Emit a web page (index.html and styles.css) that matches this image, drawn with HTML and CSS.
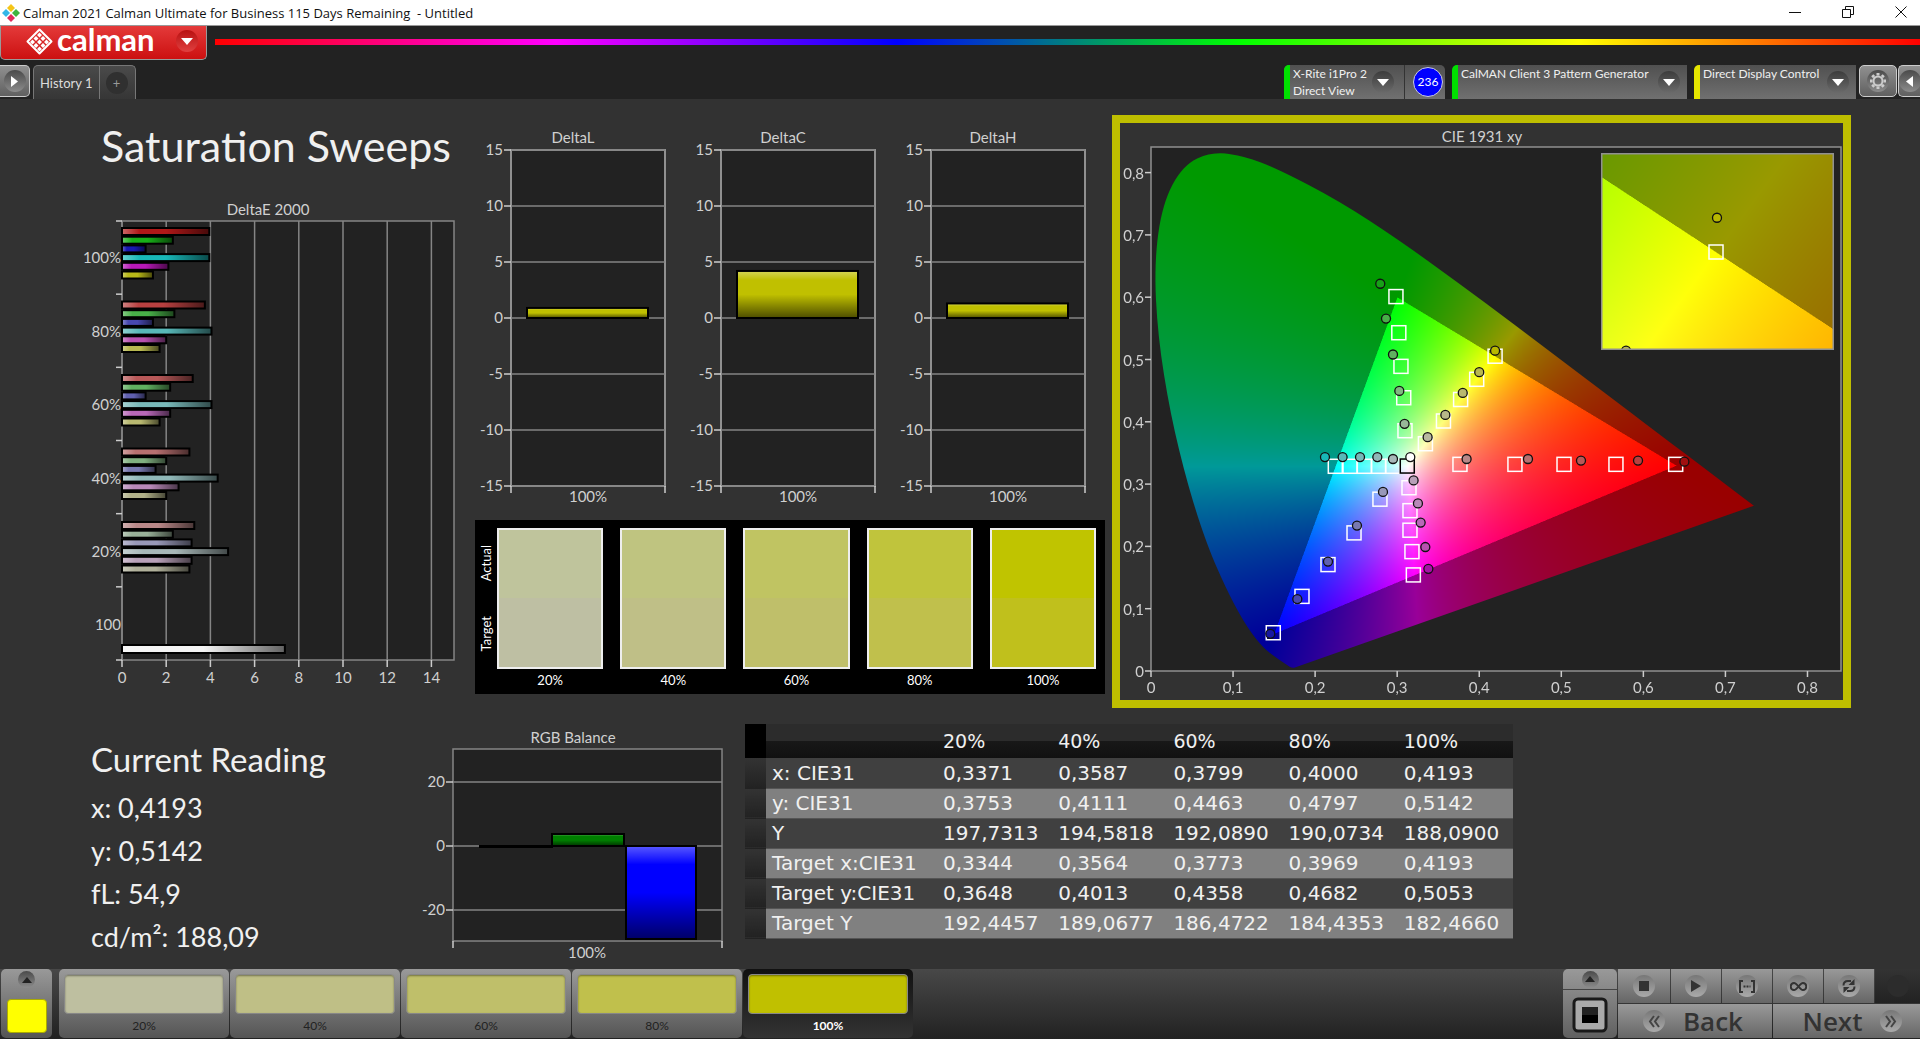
FILE: index.html
```
<!DOCTYPE html>
<html lang="en">
<head>
    <meta charset="UTF-8">
    <meta name="viewport" content="width=device-width, initial-scale=1.0">
    <title>Calman 2021 - Untitled</title>
    <link rel="stylesheet" href="styles.css">
</head>
<body>
    <header class="titlebar">
        <svg class="app-icon" width="18" height="18" viewBox="0 0 18 18">
            <path d="M9 0l4 4-4 4-4-4z" fill="#f5c518"/>
            <path d="M4 5l4 4-4 4-4-4z" fill="#35b6e8"/>
            <path d="M14 5l4 4-4 4-4-4z" fill="#3fb43f"/>
            <path d="M9 10l4 4-4 4-4-4z" fill="#e22a5b"/>
        </svg>
        <span class="window-title">Calman 2021 Calman Ultimate for Business 115 Days Remaining &nbsp;- Untitled</span>
        <div class="window-buttons">
            <button aria-label="Minimize"><svg width="12" height="12" viewBox="0 0 12 12"><path d="M0 6.500h12"/></svg></button>
            <button aria-label="Restore"><svg width="12" height="12" viewBox="0 0 12 12"><path d="M.5 3.500h8v8h-8zM3.500 3.500v-3h8v8h-3"/></svg></button>
            <button aria-label="Close"><svg width="12" height="12" viewBox="0 0 12 12"><path d="M.5.5l11 11M11.500.5l-11 11"/></svg></button>
        </div>
    </header>

    <div class="brand-row">
        <button class="brand">
            <svg width="27" height="27" viewBox="0 0 27 27">
                <path d="M13.500 1.500l12 12-12 12-12-12z" fill="none" stroke="#fff" stroke-width="2" stroke-linejoin="round"/>
                <g fill="#fff">
                    <path d="M13.500 4.500l2.500 2.500-2.500 2.500-2.500-2.500zM10 8l2.500 2.500-2.500 2.500-2.500-2.500zM17 8l2.500 2.500-2.500 2.500-2.500-2.500zM6.500 11.500l2.500 2.500-2.500 2.500-2.500-2.500zM13.500 11.500l2.500 2.500-2.500 2.500-2.500-2.500zM20.500 11.500l2.500 2.500-2.500 2.500-2.500-2.500zM10 15l2.500 2.500-2.500 2.500-2.500-2.500zM17 15l2.500 2.500-2.500 2.500-2.500-2.500zM13.500 18.500l2.500 2.500-2.500 2.500-2.500-2.500z"/>
                </g>
            </svg>
            <span class="brand-name">calman</span>
            <span class="round round-red"><svg width="12" height="7" viewBox="0 0 12 7"><path d="M0 0h12l-6 7z" fill="#fff"/></svg></span>
        </button>
        <div class="rainbow"></div>
    </div>

    <nav class="tab-row">
        <button class="chip chip-left" aria-label="Expand"><span class="round"><svg width="7" height="11" viewBox="0 0 7 11"><path d="M0 0l7 5.500-7 5.500z" fill="#fff"/></svg></span></button>
        <div class="tabs">
            <button class="tab">History 1</button>
            <button class="tab tab-add" aria-label="Add tab"><span class="round round-dark">+</span></button>
        </div>
        <div class="devices">
            <div class="device device-meter">
                <button class="device-select green">
                    <span>X-Rite i1Pro 2<br>Direct View</span>
                    <span class="round round-dark"><svg width="12" height="7" viewBox="0 0 12 7"><path d="M0 0h12l-6 7z" fill="#fff"/></svg></span>
                </button>
                <span class="badge">236</span>
            </div>
            <button class="device device-select device-source green">
                <span>CalMAN Client 3 Pattern Generator</span>
                <span class="round round-dark"><svg width="12" height="7" viewBox="0 0 12 7"><path d="M0 0h12l-6 7z" fill="#fff"/></svg></span>
            </button>
            <button class="device device-select device-display yellow">
                <span>Direct Display Control</span>
                <span class="round round-dark"><svg width="12" height="7" viewBox="0 0 12 7"><path d="M0 0h12l-6 7z" fill="#fff"/></svg></span>
            </button>
            <button class="chip" aria-label="Settings"><span class="round"><svg width="18" height="18" viewBox="0 0 18 18" fill="none" stroke="#ccc">
                <circle cx="9" cy="9" r="4.500" stroke-width="2"/>
                <path stroke-width="3" d="M9 1v2.500M9 14.500v2.500M1 9h2.500M14.500 9h2.500M3.300 3.300l1.800 1.800M12.900 12.900l1.800 1.800M3.300 14.700l1.800-1.800M12.900 5.100l1.800-1.800"/></svg></span></button>
            <button class="chip chip-right" aria-label="Collapse"><span class="round"><svg width="7" height="11" viewBox="0 0 7 11"><path d="M7 0l-7 5.500 7 5.500z" fill="#fff"/></svg></span></button>
        </div>
    </nav>

    <main class="workspace">
        <div class="top-row">
            <section class="sweeps">
                <h1>Saturation Sweeps</h1>
                <svg class="chart" id="deltaE" viewBox="0 0 405 495"></svg>
            </section>
            <section class="deltas">
                <div class="delta-charts">
                    <svg class="chart" id="deltaL" viewBox="0 0 210 397"></svg>
                    <svg class="chart" id="deltaC" viewBox="0 0 210 397"></svg>
                    <svg class="chart" id="deltaH" viewBox="0 0 210 397"></svg>
                </div>
                <div class="swatches">
                    <div class="swatch-side"><span>Actual</span><span>Target</span></div>
                    <div class="swatch"><div class="pair s20"></div>20%</div>
                    <div class="swatch"><div class="pair s40"></div>40%</div>
                    <div class="swatch"><div class="pair s60"></div>60%</div>
                    <div class="swatch"><div class="pair s80"></div>80%</div>
                    <div class="swatch"><div class="pair s100"></div>100%</div>
                </div>
            </section>
            <section class="cie">
                <svg class="chart" id="cie" viewBox="0 0 723 577"></svg>
            </section>
        </div>

        <div class="bottom-row">
            <section class="reading">
                <h2>Current Reading</h2>
                <p>x: 0,4193</p>
                <p>y: 0,5142</p>
                <p>fL: 54,9</p>
                <p>cd/m²: 188,09</p>
            </section>
            <svg class="chart" id="rgb" viewBox="0 0 335 245"></svg>
            <table class="data">
                <colgroup><col class="col-head"><col class="col-name"><col><col><col><col><col></colgroup>
                <thead>
                    <tr><th></th><th></th><th>20%</th><th>40%</th><th>60%</th><th>80%</th><th>100%</th></tr>
                </thead>
                <tbody>
                    <tr><th></th><td>x: CIE31</td><td>0,3371</td><td>0,3587</td><td>0,3799</td><td>0,4000</td><td>0,4193</td></tr>
                    <tr><th></th><td>y: CIE31</td><td>0,3753</td><td>0,4111</td><td>0,4463</td><td>0,4797</td><td>0,5142</td></tr>
                    <tr><th></th><td>Y</td><td>197,7313</td><td>194,5818</td><td>192,0890</td><td>190,0734</td><td>188,0900</td></tr>
                    <tr><th></th><td>Target x:CIE31</td><td>0,3344</td><td>0,3564</td><td>0,3773</td><td>0,3969</td><td>0,4193</td></tr>
                    <tr><th></th><td>Target y:CIE31</td><td>0,3648</td><td>0,4013</td><td>0,4358</td><td>0,4682</td><td>0,5053</td></tr>
                    <tr><th></th><td>Target Y</td><td>192,4457</td><td>189,0677</td><td>186,4722</td><td>184,4353</td><td>182,4660</td></tr>
                </tbody>
            </table>
        </div>
    </main>

    <footer class="toolbar">
        <button class="pattern" aria-label="Pattern">
            <span class="round round-small"><svg width="10" height="6" viewBox="0 0 10 6"><path d="M0 6h10l-5-6z" fill="#222"/></svg></span>
            <span class="pattern-color"></span>
        </button>
        <div class="levels">
            <button class="level"><span class="level-color c20"></span>20%</button>
            <button class="level"><span class="level-color c40"></span>40%</button>
            <button class="level"><span class="level-color c60"></span>60%</button>
            <button class="level"><span class="level-color c80"></span>80%</button>
            <button class="level active"><span class="level-color c100"></span>100%</button>
        </div>
        <div class="controls">
            <div class="window-tile">
                <button class="tile-up" aria-label="Open"><span class="round round-small"><svg width="10" height="6" viewBox="0 0 10 6"><path d="M0 6h10l-5-6z" fill="#222"/></svg></span></button>
                <button class="tile-stop" aria-label="Window size"><svg width="36" height="36" viewBox="0 0 36 36">
                    <rect x="2" y="2" width="32" height="32" rx="4" fill="#aaa" stroke="#1a1a1a" stroke-width="3"/>
                    <rect x="10" y="10" width="16" height="16" fill="#000"/>
                    <path d="M10 10h16v8h-16z" fill="#222"/></svg></button>
            </div>
            <div class="transport">
                <div class="transport-row">
                    <button aria-label="Stop"><span class="round round-light"><svg width="10" height="10"><rect width="10" height="10" fill="#333"/></svg></span></button>
                    <button aria-label="Play"><span class="round round-light"><svg width="10" height="12" viewBox="0 0 10 12"><path d="M0 0l10 6-10 6z" fill="#333"/></svg></span></button>
                    <button aria-label="Range"><span class="round round-light"><svg width="16" height="13" viewBox="0 0 16 13" fill="none" stroke="#333" stroke-width="2"><path d="M4 1h-3v11h3M12 1h3v11h-3"/><path d="M4.500 6.500h7" stroke-dasharray="2 1"/></svg></span></button>
                    <button aria-label="Continuous"><span class="round round-light"><svg width="17" height="9" viewBox="0 0 17 9" fill="none" stroke="#333" stroke-width="2"><path d="M8.500 4.500c-2-2.500-3-3.500-4.500-3.500a3.300 3.500 0 0 0 0 7c1.500 0 2.500-1 4.500-3.500s3-3.500 4.500-3.500a3.300 3.500 0 0 1 0 7c-1.500 0-2.500-1-4.500-3.500z"/></svg></span></button>
                    <button aria-label="Refresh"><span class="round round-light"><svg width="14" height="14" viewBox="0 0 14 14" fill="none" stroke="#333" stroke-width="2"><path d="M1.500 6.500c0-3 2-4.500 4.500-4.500h3M12.500 7.500c0 3-2 4.500-4.500 4.500h-3"/><path d="M12.500 0v6h-6zM1.500 14v-6h6z" fill="#333" stroke="none"/></svg></span></button>
                    <span class="blank"><span class="round"></span></span>
                </div>
                <div class="nav-row">
                    <button class="back"><span class="round round-light"><svg width="12" height="13" viewBox="0 0 12 13" fill="none" stroke="#444" stroke-width="2"><path d="M6 1l-4 5.500 4 5.500M11 1l-4 5.500 4 5.500"/></svg></span>Back</button>
                    <button class="next">Next<span class="round round-light"><svg width="12" height="13" viewBox="0 0 12 13" fill="none" stroke="#444" stroke-width="2"><path d="M1 1l4 5.500-4 5.500M6 1l4 5.500-4 5.500"/></svg></span></button>
                </div>
            </div>
        </div>
    </footer>
    <script src="charts.js"></script>
</body>
</html>
```
FILE: styles.css
```
* {
    box-sizing: border-box;
}
body {
    margin: 0;
    min-height: 100vh;
    display: flex;
    flex-direction: column;
    background-color: #222;
    color: #f0f0f0;
    font-family: Lato, "Open Sans", sans-serif;
    font-size: 14px;
}
button {
    font: inherit;
    color: inherit;
    border: none;
    padding: 0;
    background: none;
    cursor: pointer;
}
h1, h2, p {
    margin: 0;
    font-weight: normal;
}

/* window title */
.titlebar {
    display: flex;
    align-items: center;
    height: 26px;
    padding-left: 2px;
    background-color: #fff;
    border-bottom: 1px solid #999;
    color: #111;
}
.window-title {
    flex: 1;
    margin-left: 3px;
    font-family: "Open Sans", sans-serif;
    font-size: 13px;
}
.window-buttons {
    display: flex;
    gap: 15px;
}
.window-buttons button {
    width: 38px;
    height: 25px;
}
.window-buttons svg {
    fill: none;
    stroke: #111;
}

/* logo and rainbow line */
.brand-row {
    display: flex;
    align-items: flex-start;
    height: 39px;
}
.brand {
    display: flex;
    align-items: center;
    width: 207px;
    height: 34px;
    padding: 0 8px 3px 25px;
    border: 1px solid #999;
    border-top: none;
    border-radius: 0 0 5px 5px;
    background: linear-gradient(#e43a3a, #cc1010);
}
.brand-name {
    flex: 1;
    margin-left: 4px;
    color: #fff;
    font-size: 31px;
    font-weight: bold;
    line-height: 26px;
    padding-bottom: 4px;
    text-align: left;
}
.rainbow {
    flex: 1;
    height: 6px;
    margin: 13px 0 0 8px;
    background: linear-gradient(90deg, #f00 0%, #f0f 20%, #00f 40%, #0f0 60%, #ff0 80%, #f00 100%);
}
.round {
    display: flex;
    align-items: center;
    justify-content: center;
    flex: none;
    width: 22px;
    height: 22px;
    border-radius: 50%;
    background: linear-gradient(#4a4a4a, #8c8c8c);
}
.round-red {
    background: linear-gradient(#b81010, #e04040);
}
.round-dark {
    background: linear-gradient(#3c3c3c, #6a6a6a);
}
.round-light {
    background: linear-gradient(#777, #aaa);
}
.round-small {
    width: 17px;
    height: 17px;
}

/* tabs and devices */
.tab-row {
    display: flex;
    align-items: flex-start;
    height: 34px;
}
.chip {
    display: flex;
    align-items: center;
    justify-content: center;
    width: 38px;
    height: 32px;
    border: 1px solid #ccc;
    border-radius: 5px;
    background: linear-gradient(#909090, #606060);
}
.chip-left {
    width: 30px;
    border-left: none;
    border-radius: 0 5px 5px 0;
}
.chip-right {
    width: 22px;
    margin-left: 1px;
    border-right: none;
    border-radius: 5px 0 0 5px;
    overflow: hidden;
}
.tabs {
    display: flex;
    height: 34px;
    margin-left: 3px;
    border: 1px solid #777;
    border-bottom: none;
    border-radius: 5px 5px 0 0;
    background: linear-gradient(#4a4a4a, #363636);
}
.tab {
    padding: 0 6px;
    color: #ddd;
    font-size: 13px;
    line-height: 34px;
}
.tab-add {
    display: flex;
    align-items: center;
    width: 36px;
    border-left: 1px solid #777;
    color: #999;
}
.tab-add .round {
    background: #303030;
    line-height: 20px;
}
.devices {
    display: flex;
    margin-left: auto;
}
.device {
    height: 34px;
    margin-right: 7px;
    border-radius: 5px;
    border-bottom-right-radius: 0;
    background: linear-gradient(#505050, #707070);
}
.device-meter {
    display: flex;
    width: 161px;
}
.device-meter .device-select {
    width: 121px;
    height: 34px;
    border-right: 1px solid #333;
}
.device-source {
    width: 235px;
}
.device-display {
    width: 162px;
    margin-right: 3px;
}
.device-select {
    display: flex;
    align-items: center;
    justify-content: space-between;
    padding: 0 7px 0 3px;
    border-left: 6px solid;
    border-radius: 5px 0 0 0;
    font-size: 12px;
    line-height: 17px;
    text-align: left;
}
.device-select > span:first-child {
    align-self: flex-start;
}
.device-meter .device-select {
    padding-right: 10px;
}
.green {
    border-left-color: #00e000;
}
.yellow {
    border-left-color: #e6e600;
}
.badge {
    width: 30px;
    height: 30px;
    margin: 2px 2px 0 8px;
    border: 1px solid #ccd;
    border-radius: 50%;
    background: #00f;
    color: #fff;
    font-size: 12px;
    line-height: 28px;
    text-align: center;
}

/* workspace */
.workspace {
    flex: 1;
    background-color: #323232;
}
.top-row {
    display: grid;
    grid-template-columns: 475fr 637fr 739fr 69fr;
}
.sweeps {
    padding: 22px 0 0 70px;
}
h1 {
    margin: 0 0 24px 31px;
    font-size: 43px;
    line-height: 50px;
    white-space: nowrap;
}
.chart {
    display: block;
    width: 100%;
    height: auto;
}
.chart text {
    fill: #d0d0d0;
    font-size: 15px;
}
.deltas {
    padding: 24px 7px 0 0;
}
.delta-charts {
    display: grid;
    grid-template-columns: 1fr 1fr 1fr;
}
.swatches {
    display: flex;
    gap: 17px;
    padding: 8px 9px 3px 0;
    background-color: #000;
    color: #fff;
    font-size: 13px;
}
.swatch-side {
    display: flex;
    flex-direction: column;
    justify-content: space-around;
    align-items: center;
    width: 22px;
    height: 141px;
    margin-right: -17px;
}
.swatch-side span {
    writing-mode: vertical-rl;
    transform: rotate(180deg);
}
.swatch {
    flex: 1;
    line-height: 22px;
    text-align: center;
}
.pair {
    height: 141px;
    border: 2px solid #eee;
}
.s20 { background: linear-gradient(#bfc49c 50%, #bebfa3 50%); }
.s40 { background: linear-gradient(#bfc480 50%, #bfbf87 50%); }
.s60 { background: linear-gradient(#c0c462 50%, #bfbf6a 50%); }
.s80 { background: linear-gradient(#c0c43c 50%, #c0c04c 50%); }
.s100 { background: linear-gradient(#c0c400 50%, #c0c01c 50%); }
.cie {
    align-self: start;
    margin-top: 16px;
    border: 8px solid #bebe00;
}

/* readings */
.bottom-row {
    display: grid;
    grid-template-columns: 410fr 335fr 768fr 407fr;
    align-items: start;
    margin-top: 16px;
}
.reading {
    padding: 16px 0 0 91px;
    font-size: 27px;
    line-height: 43px;
}
h2 {
    margin-bottom: 8px;
    font-size: 33px;
    line-height: 38px;
}
.data {
    width: 100%;
    border-collapse: collapse;
    table-layout: fixed;
    font-family: "DejaVu Sans", sans-serif;
    font-size: 20px;
}
.col-head {
    width: 21px;
}
.col-name {
    width: 171px;
}
.data th,
.data td {
    height: 30px;
    padding: 0 0 0 6px;
    border-bottom: 1px solid #555;
    font-weight: normal;
    line-height: 28px;
    text-align: left;
    white-space: nowrap;
}
.data thead th {
    height: 34px;
    border-bottom: none;
    background: linear-gradient(#2c2c2c 50%, #181818 50%, #111);
    font-size: 19px;
}
.data thead th:first-child {
    background: #000;
}
.data td {
    background-color: #404040;
}
.data tbody tr:nth-child(even) td {
    background-color: #808080;
}
.data tbody th {
    border-bottom-color: #222;
    background: linear-gradient(#333, #222);
}

/* bottom toolbar */
.toolbar {
    display: flex;
    height: 70px;
    background: linear-gradient(#484848, #222);
}
.pattern {
    display: flex;
    flex-direction: column;
    align-items: center;
    justify-content: space-between;
    width: 51px;
    height: 69px;
    margin: 0 7px 0 1px;
    padding: 2px 0 5px;
    border-radius: 5px;
    background: linear-gradient(#999, #555);
}
.pattern-color {
    width: 40px;
    height: 34px;
    border: 1px solid #aa0;
    border-radius: 4px;
    background: #ff0;
}
.levels {
    display: flex;
    gap: 1px;
}
.level {
    display: flex;
    flex-direction: column;
    align-items: center;
    width: 170px;
    height: 69px;
    padding-top: 5px;
    border-radius: 5px;
    background: linear-gradient(#9a9a9a, #555);
    color: #222;
    font-size: 12px;
    line-height: 24px;
}
.level-color {
    width: 160px;
    height: 42px;
    border: 1px solid #888;
    border-radius: 4px;
    box-shadow: inset 0 1px 2px rgba(0,0,0,0.4);
}
.level.active {
    background: linear-gradient(#111, #333);
    color: #fff;
    font-weight: bold;
}
.c20 { background: #bebfa0; }
.c40 { background: #bfbf86; }
.c60 { background: #bfbf6a; }
.c80 { background: #c0c04c; }
.c100 { background: #c0c000; }
.controls {
    display: flex;
    gap: 1px;
    margin-left: auto;
}
.window-tile {
    display: flex;
    flex-direction: column;
    width: 54px;
    height: 69px;
    border-radius: 5px;
    background: linear-gradient(#999, #606060);
}
.tile-up {
    display: flex;
    justify-content: center;
    align-items: center;
    height: 21px;
    border-bottom: 1px solid #444;
}
.tile-stop {
    height: 48px;
    padding-top: 4px;
}
.transport {
    width: 302px;
}
.transport-row,
.nav-row {
    display: flex;
    gap: 1px;
    height: 34px;
}
.nav-row {
    margin-top: 1px;
}
.transport button,
.blank {
    display: flex;
    align-items: center;
    justify-content: center;
    flex: none;
    width: 50px;
    height: 34px;
    background: linear-gradient(#999, #666);
}
.transport-row button:first-child {
    width: 52px;
}
.transport .blank {
    flex: 1;
    background: linear-gradient(#333, #222);
}
.blank .round {
    background: #2c2c2c;
}
.transport .back,
.transport .next {
    gap: 18px;
    width: 154px;
    color: #333;
    font-family: "Open Sans", sans-serif;
    font-size: 26px;
    font-weight: 600;
    line-height: 32px;
}
.transport .back {
    padding-right: 4px;
}
.transport .next {
    width: 147px;
    padding-left: 12px;
}
```
FILE: charts.js
```
var NS = 'http://www.w3.org/2000/svg';
var GRID = '#858585';

function add(parent, tag, attrs, text) {
    var el = document.createElementNS(NS, tag);
    for (var key in attrs) {
        el.setAttribute(key, attrs[key]);
    }
    if (text !== undefined) el.textContent = text;
    parent.appendChild(el);
    return el;
}

function line(svg, x1, y1, x2, y2, color) {
    add(svg, 'line', {x1: x1, y1: y1, x2: x2, y2: y2, stroke: color || GRID, 'stroke-width': 1.5});
}

function label(svg, x, y, text, anchor) {
    add(svg, 'text', {x: x, y: y, 'text-anchor': anchor || 'middle'}, text);
}

// glossy overlays shared by all the bars
function gloss(svg, id, vertical) {
    var g = add(svg, 'linearGradient', {id: id, x2: vertical ? 0 : 1, y2: vertical ? 1 : 0});
    [[0, '#fff', 0.35], [0.2, '#fff', 0], [0.5, '#000', 0], [1, '#000', 0.6]].forEach(function(s) {
        add(g, 'stop', {offset: s[0], 'stop-color': s[1], 'stop-opacity': s[2]});
    });
}

function bar(svg, x, y, w, h, color, id) {
    add(svg, 'rect', {x: x, y: y, width: w, height: h, fill: color});
    add(svg, 'rect', {x: x, y: y, width: w, height: h, fill: 'url(#' + id + ')', stroke: '#000', 'stroke-width': 2});
}

function drawDeltaE() {
    var svg = document.getElementById('deltaE');
    var left = 52, right = 384, top = 26, bottom = 465, unit = 22.1;
    var i;
    gloss(svg, 'glossE', false);
    add(svg, 'rect', {x: left, y: top, width: right - left, height: bottom - top, fill: '#222', stroke: GRID, 'stroke-width': 1.5});
    label(svg, 198, 20, 'DeltaE 2000');
    for (i = 0; i <= 14; i += 2) {
        var x = left + i * unit;
        line(svg, x, top, x, bottom);
        line(svg, x, bottom, x, bottom + 7, '#ccc');
        label(svg, x, bottom + 23, i);
    }
    for (i = 0; i <= 6; i++) {
        var y = top + i * (bottom - top) / 6;
        line(svg, left - 6, y, left, y, '#ccc');
    }
    var groups = [
        ['100%', [3.95, 2.3, 1.07, 3.95, 2.1, 1.4], ['#b01818', '#18b018', '#1818b0', '#18b8b8', '#b818b8', '#b8b818']],
        ['80%', [3.75, 2.37, 1.4, 4.05, 2, 1.7], ['#b84040', '#48b048', '#4848b0', '#58b8b8', '#b850b0', '#b8b850']],
        ['60%', [3.2, 2.18, 1.07, 4.05, 2.18, 1.7], ['#b85858', '#60b060', '#6060b0', '#78b8b8', '#b868b8', '#b8b870']],
        ['40%', [3.05, 2, 1.52, 4.33, 2.56, 2], ['#b87070', '#80b080', '#7878b0', '#90b8b8', '#b888b8', '#b0b088']],
        ['20%', [3.27, 2.3, 3.15, 4.8, 3.15, 3.05], ['#b88888', '#98b098', '#9898b8', '#a8b8b8', '#b8a0b8', '#b0b09a']]
    ];
    groups.forEach(function(group, n) {
        var y0 = top + n * 73.5 + 7;
        group[1].forEach(function(value, k) {
            bar(svg, left, y0 + k * 8.7, value * unit, 7, group[2][k], 'glossE');
        });
        label(svg, left - 1, y0 + 35, group[0], 'end');
    });
    bar(svg, left, 450, 7.37 * unit, 8, '#f4f4f4', 'glossE');
    label(svg, left - 1, 435, '100', 'end');
}

function drawDelta(name, value) {
    var svg = document.getElementById('delta' + name);
    var left = 36, right = 190, top = 27, unit = 11.2;
    var zero = top + 15 * unit;
    gloss(svg, 'gloss' + name, true);
    add(svg, 'rect', {x: left, y: top, width: right - left, height: 30 * unit, fill: '#222', stroke: '#909090', 'stroke-width': 2});
    label(svg, 98, 20, 'Delta' + name);
    for (var v = 15; v >= -15; v -= 5) {
        var y = zero - v * unit;
        line(svg, left, y, right, y);
        line(svg, left - 7, y, left, y, '#ccc');
        label(svg, left - 8, y + 5, v, 'end');
    }
    line(svg, left, top + 30 * unit, left, top + 30 * unit + 7, '#ccc');
    line(svg, right, top + 30 * unit, right, top + 30 * unit + 7, '#ccc');
    label(svg, 113, 379, '100%');
    bar(svg, left + 16, zero - value * unit, 121, value * unit, '#c0c000', 'gloss' + name);
}

function drawRgb() {
    var svg = document.getElementById('rgb');
    var left = 43, right = 312, top = 25, bottom = 217, zero = 122, unit = 3.2;
    gloss(svg, 'glossRgb', true);
    add(svg, 'rect', {x: left, y: top, width: right - left, height: bottom - top, fill: '#222', stroke: GRID, 'stroke-width': 1.5});
    label(svg, 163, 19, 'RGB Balance');
    [20, 0, -20].forEach(function(v) {
        var y = zero - v * unit;
        line(svg, left, y, right, y);
        line(svg, left - 7, y, left, y, '#ccc');
        label(svg, left - 8, y + 5, v, 'end');
    });
    line(svg, left, bottom, left, bottom + 7, '#ccc');
    line(svg, right, bottom, right, bottom + 7, '#ccc');
    label(svg, 177, 234, '100%');
    bar(svg, 70, zero, 72, 1, '#000', 'glossRgb');
    bar(svg, 142, zero - 12, 72, 12, '#008000', 'glossRgb');
    bar(svg, 216, zero, 70, 93, '#00f', 'glossRgb');
}

var LOCUS = [
    [.1741, .005], [.1714, .0051], [.1689, .0069], [.1644, .0109], [.1566, .0177], [.144, .0297], [.1355, .0399],
    [.1241, .0578], [.1096, .0868], [.0913, .1327], [.0687, .2007], [.0454, .295], [.0235, .4127], [.0082, .5384],
    [.0039, .6548], [.0139, .7502], [.0389, .812], [.0743, .8338], [.1142, .8262], [.1547, .8059], [.2296, .7543],
    [.3016, .6923], [.3731, .6245], [.4441, .5547], [.5125, .4866], [.5752, .4242], [.627, .3725], [.6658, .334],
    [.6915, .3083], [.719, .2809], [.7347, .2653]
];

// chromaticity to display colour, dimmed outside the Rec.709 triangle
function xyToRgb(x, y) {
    var z = 1 - x - y;
    var c = [
        3.2406 * x - 1.5372 * y - 0.4986 * z,
        -0.9689 * x + 1.8758 * y + 0.0415 * z,
        0.0557 * x - 0.204 * y + 1.057 * z
    ];
    var dim = Math.min(c[0], c[1], c[2]) < 0 ? 0.6 : 1;
    var max = Math.max(c[0], c[1], c[2]);
    return c.map(function(v) {
        return 255 * dim * Math.max(v, 0) / max;
    });
}

// x0, y0: chromaticity at the lower left corner; sx, sy: pixels per unit
function drawGamut(svg, left, top, w, h, x0, y0, sx, sy) {
    var fo = add(svg, 'foreignObject', {x: left, y: top, width: w, height: h});
    var canvas = document.createElement('canvas');
    var scale = 2;
    canvas.width = w * scale;
    canvas.height = h * scale;
    canvas.style.width = w + 'px';
    canvas.style.height = h + 'px';
    canvas.style.display = 'block';
    fo.appendChild(canvas);
    var ctx = canvas.getContext('2d');
    var img = ctx.createImageData(canvas.width, canvas.height);
    for (var j = 0; j < canvas.height; j++) {
        for (var i = 0; i < canvas.width; i++) {
            var rgb = xyToRgb(x0 + i / scale / sx, y0 + (h - j / scale) / sy);
            var p = (j * canvas.width + i) * 4;
            img.data[p] = rgb[0];
            img.data[p + 1] = rgb[1];
            img.data[p + 2] = rgb[2];
            img.data[p + 3] = 255;
        }
    }
    ctx.putImageData(img, 0, 0);
    var pts = LOCUS.map(function(q) {
        return [(q[0] - x0) * sx * scale, (h - (q[1] - y0) * sy) * scale];
    });
    ctx.globalCompositeOperation = 'destination-in';
    ctx.beginPath();
    ctx.moveTo(pts[0][0], pts[0][1]);
    for (var k = 1; k < pts.length - 1; k++) {
        ctx.quadraticCurveTo(pts[k][0], pts[k][1], (pts[k][0] + pts[k + 1][0]) / 2, (pts[k][1] + pts[k + 1][1]) / 2);
    }
    ctx.lineTo(pts[k][0], pts[k][1]);
    ctx.closePath();
    ctx.fill();
}

function square(svg, x, y, color) {
    add(svg, 'rect', {x: x - 7, y: y - 7, width: 14, height: 14, fill: 'none', stroke: color, 'stroke-width': 1.5});
}

function dot(svg, x, y, color) {
    add(svg, 'circle', {cx: x, cy: y, r: 4.5, fill: color, 'stroke': '#111', 'stroke-width': 1.3});
}

function drawCie() {
    var svg = document.getElementById('cie');
    var left = 31, top = 24, w = 690, h = 524, sx = 820.6, sy = 623, i;
    add(svg, 'rect', {x: left, y: top, width: w, height: h, fill: '#222', stroke: '#909090', 'stroke-width': 1.5});
    label(svg, 362, 19, 'CIE 1931 xy');
    drawGamut(svg, left, top, w, h, 0, 0, sx, sy);
    for (i = 0; i <= 8; i++) {
        var text = i ? '0,' + i : '0';
        line(svg, left + i * sx / 10, top + h, left + i * sx / 10, top + h + 6, '#ccc');
        label(svg, left + i * sx / 10, top + h + 22, text);
        line(svg, left - 6, top + h - i * sy / 10, left, top + h - i * sy / 10, '#ccc');
        label(svg, left - 7, top + h - i * sy / 10 + 6, text, 'end');
    }
    var targets = [
        [.2985, .601], [.302, .543], [.3046, .489], [.308, .4386], [.3095, .3857],
        [.4193, .5053], [.3969, .4682], [.3773, .4358], [.3564, .4013], [.3344, .3648],
        [.2246, .3286], [.2425, .3286], [.26, .3286], [.2774, .3286], [.2945, .3286],
        [.3765, .3317], [.4435, .3317], [.5033, .3317], [.5666, .3317], [.6394, .3317],
        [.279, .2758], [.2474, .2217], [.2157, .1708], [.184, .1198], [.149, .0614],
        [.3144, .2942], [.3156, .2574], [.3156, .226], [.318, .1916], [.3197, .1542]
    ];
    var actual = [
        [.2794, .6216, '#18a018'], [.2864, .5657, '#48b048'], [.2949, .508, '#60b060'], [.3026, .4496, '#80b880'], [.309, .3968, '#98b898'],
        [.4193, .5142, '#b8b800'], [.4, .4797, '#b8b850'], [.3799, .4463, '#b8b870'], [.3587, .4111, '#b8b888'], [.3371, .3753, '#b8b8a0'],
        [.212, .3434, '#18b8b8'], [.2335, .3434, '#58b8b8'], [.2547, .3434, '#78b8b8'], [.2758, .3434, '#90b8b8'], [.2949, .3403, '#a8b8b8'],
        [.3846, .3403, '#b88888'], [.4594, .3403, '#b87070'], [.524, .3378, '#b85858'], [.5935, .3378, '#b84040'], [.65, .336, '#a01010'],
        [.2827, .2875, '#9898b8'], [.251, .2334, '#7878b0'], [.2157, .1757, '#6060b0'], [.1783, .1155, '#4848b0'], [.1454, .0596, '#1818a0'],
        [.32, .3059, '#b8a0b8'], [.3253, .269, '#b888b8'], [.3286, .2383, '#b868b8'], [.3343, .199, '#b850b0'], [.338, .164, '#a810a8'],
        [.316, .3434, '#fff']
    ];
    targets.forEach(function(t) {
        square(svg, left + t[0] * sx, top + h - t[1] * sy, '#fff');
    });
    square(svg, left + .3123 * sx, top + h - .329 * sy, '#000');
    actual.forEach(function(a) {
        dot(svg, left + a[0] * sx, top + h - a[1] * sy, a[2]);
    });

    // magnified view round the current reading
    var zw = 233, zh = 197, zx = 4660, zy = 3850;
    var x0 = .4193 - 115 / zx, y0 = .5053 - 98 / zy;
    var inset = add(svg, 'svg', {x: 481, y: 30, width: zw, height: zh});
    drawGamut(inset, 0, 0, zw, zh, x0, y0, zx, zy);
    square(inset, 115, zh - 98, '#fff');
    dot(inset, 116, zh - (.5142 - y0) * zy, '#b8b800');
    dot(inset, (.4 - x0) * zx, zh - (.4797 - y0) * zy, '#b8b850');
    add(inset, 'rect', {x: 0, y: 0, width: zw, height: zh, fill: 'none', stroke: '#909090', 'stroke-width': 3});
}

drawDeltaE();
drawDelta('L', 0.9);
drawDelta('C', 4.2);
drawDelta('H', 1.3);
drawRgb();
drawCie();
```
